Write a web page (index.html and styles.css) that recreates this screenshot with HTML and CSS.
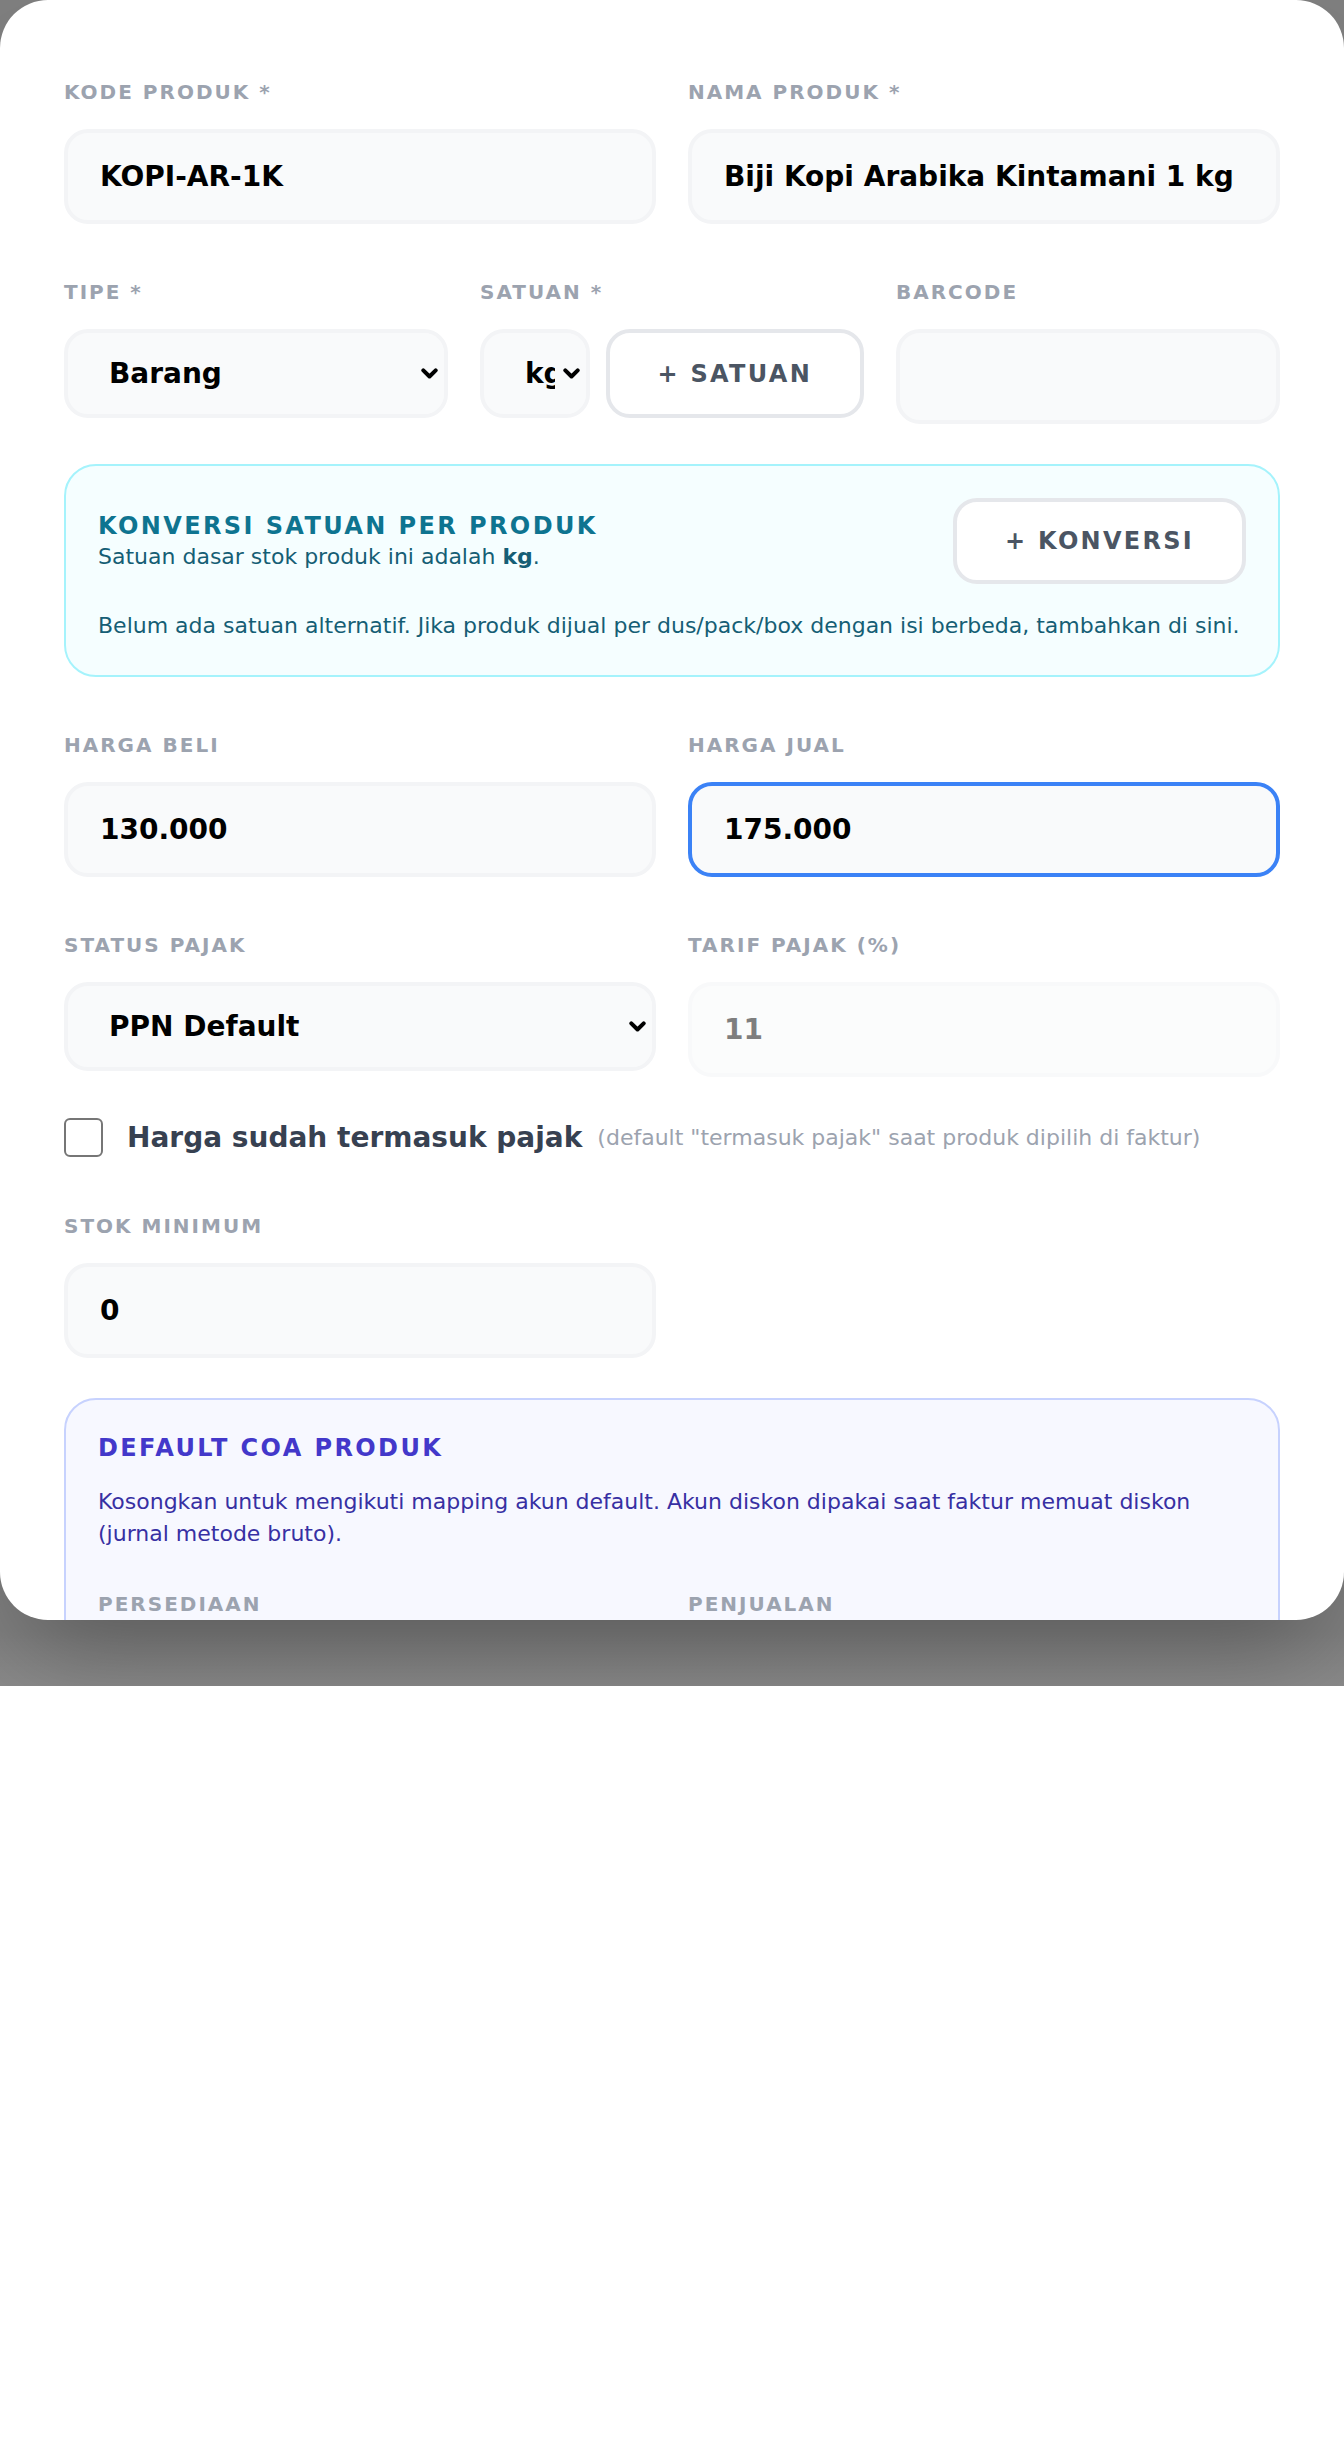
FILE: index.html
```html
<!DOCTYPE html>
<html lang="id">
<head>
<meta charset="utf-8">
<title>Produk</title>
<link rel="stylesheet" href="styles.css">
</head>
<body>
<div class="backdrop">
  <div class="modal">
    <form class="form">
      <div class="row row-2">
        <div class="field">
          <label class="label">Kode Produk *</label>
          <input class="input" type="text" value="KOPI-AR-1K">
        </div>
        <div class="field">
          <label class="label">Nama Produk *</label>
          <input class="input" type="text" value="Biji Kopi Arabika Kintamani 1 kg">
        </div>
      </div>

      <div class="row row-3">
        <div class="field">
          <label class="label">Tipe *</label>
          <div class="select-wrap">
            <select class="select"><option>Barang</option><option>Jasa</option></select>
            <span class="select-cap"><svg class="chevron" viewBox="0 0 17 11" aria-hidden="true"><path d="M2.3 2.3 L8.5 8.5 L14.7 2.3" /></svg></span>
          </div>
        </div>
        <div class="field">
          <label class="label">Satuan *</label>
          <div class="satuan">
            <div class="select-wrap select-grow">
              <select class="select"><option>kg</option><option>pcs</option></select>
              <span class="select-cap"><svg class="chevron" viewBox="0 0 17 11" aria-hidden="true"><path d="M2.3 2.3 L8.5 8.5 L14.7 2.3" /></svg></span>
            </div>
            <button type="button" class="btn">+ Satuan</button>
          </div>
        </div>
        <div class="field">
          <label class="label">Barcode</label>
          <input class="input" type="text" value="">
        </div>
      </div>

      <section class="panel panel-cyan">
        <div class="panel-head">
          <div class="panel-head-text">
            <h3 class="panel-title title-cyan">Konversi Satuan per Produk</h3>
            <p class="panel-sub">Satuan dasar stok produk ini adalah <b>kg</b>.</p>
          </div>
          <button type="button" class="btn btn-konversi">+ Konversi</button>
        </div>
        <p class="panel-note">Belum ada satuan alternatif. Jika produk dijual per dus/pack/box dengan isi berbeda, tambahkan di sini.</p>
      </section>

      <div class="row row-2">
        <div class="field">
          <label class="label">Harga Beli</label>
          <input class="input" type="text" value="130.000">
        </div>
        <div class="field">
          <label class="label">Harga Jual</label>
          <input class="input is-focused" type="text" value="175.000">
        </div>
      </div>

      <div class="row row-2">
        <div class="field">
          <label class="label">Status Pajak</label>
          <div class="select-wrap">
            <select class="select"><option>PPN Default</option><option>Bebas Pajak</option></select>
            <span class="select-cap"><svg class="chevron" viewBox="0 0 17 11" aria-hidden="true"><path d="M2.3 2.3 L8.5 8.5 L14.7 2.3" /></svg></span>
          </div>
        </div>
        <div class="field">
          <label class="label">Tarif Pajak (%)</label>
          <input class="input is-disabled" type="text" value="11" disabled>
        </div>
      </div>

      <label class="check-row">
        <input class="checkbox" type="checkbox">
        <span class="check-text">
          <span class="check-strong">Harga sudah termasuk pajak</span>
          <span class="check-hint">(default "termasuk pajak" saat produk dipilih di faktur)</span>
        </span>
      </label>

      <div class="row row-2">
        <div class="field">
          <label class="label">Stok Minimum</label>
          <input class="input" type="text" value="0">
        </div>
      </div>

      <section class="panel panel-indigo">
        <h3 class="panel-title title-indigo">Default COA Produk</h3>
        <p class="coa-desc">Kosongkan untuk mengikuti mapping akun default. Akun diskon dipakai saat faktur memuat diskon (jurnal metode bruto).</p>
        <div class="coa-grid">
          <div class="field">
            <label class="label">Persediaan</label>
            <div class="select-wrap">
              <select class="select"><option>Default</option></select>
              <span class="select-cap"><svg class="chevron" viewBox="0 0 17 11" aria-hidden="true"><path d="M2.3 2.3 L8.5 8.5 L14.7 2.3" /></svg></span>
            </div>
          </div>
          <div class="field">
            <label class="label">Penjualan</label>
            <div class="select-wrap">
              <select class="select"><option>Default</option></select>
              <span class="select-cap"><svg class="chevron" viewBox="0 0 17 11" aria-hidden="true"><path d="M2.3 2.3 L8.5 8.5 L14.7 2.3" /></svg></span>
            </div>
          </div>
        </div>
      </section>
    </form>
  </div>
</div>
</body>
</html>
```
FILE: styles.css
```css
* {
  box-sizing: border-box;
}

html,
body {
  margin: 0;
  padding: 0;
  background: #ffffff;
}

body {
  font-family: "DejaVu Sans", Verdana, sans-serif;
  color: #000000;
}

.backdrop {
  height: 1686px;
  background: linear-gradient(to bottom, #7f7f7f 0, #808080 1630px, #8a8a8a 1686px);
}

.modal {
  height: 1620px;
  background: #ffffff;
  border-radius: 48px;
  overflow: hidden;
  padding: 64px 64px 0;
  box-shadow: 0 50px 100px -24px rgba(0, 0, 0, 0.3);
}

.form {
  display: flex;
  flex-direction: column;
  gap: 40px;
}

.row {
  display: grid;
  column-gap: 32px;
}

.row-2 {
  grid-template-columns: 1fr 1fr;
}

.row-3 {
  grid-template-columns: 1fr 1fr 1fr;
}

.field {
  display: flex;
  flex-direction: column;
  min-width: 0;
}

.label {
  height: 56px;
  display: flex;
  align-items: center;
  margin-bottom: 9px;
  font-size: 20px;
  font-weight: 700;
  letter-spacing: 0.1em;
  text-transform: uppercase;
  color: #9ca3af;
  white-space: nowrap;
}

.input {
  display: block;
  width: 100%;
  height: 95px;
  margin: 0;
  padding: 0 32px;
  border: 4px solid #f3f4f6;
  border-radius: 24px;
  background: #f9fafb;
  font-family: "DejaVu Sans", Verdana, sans-serif;
  font-size: 28px;
  font-weight: 700;
  color: #000000;
  outline: none;
}

.input.is-focused {
  border-color: #3b82f6;
}

.input.is-disabled {
  opacity: 0.5;
  color: #000000;
  -webkit-text-fill-color: #000000;
}

.select-wrap {
  position: relative;
}

.select-grow {
  flex: 1 1 auto;
  min-width: 0;
}

.select {
  display: block;
  width: 100%;
  height: 89px;
  margin: 0;
  padding: 0 31px 0 41px;
  border: 4px solid #f3f4f6;
  border-radius: 24px;
  background: #f9fafb;
  font-family: "DejaVu Sans", Verdana, sans-serif;
  font-size: 28px;
  font-weight: 700;
  color: #000000;
  -webkit-appearance: none;
  appearance: none;
  outline: none;
}

.select-cap {
  position: absolute;
  top: 4px;
  right: 4px;
  bottom: 4px;
  width: 31px;
  display: flex;
  align-items: center;
  justify-content: flex-end;
  padding-right: 6px;
  background: #f9fafb;
  border-radius: 0 20px 20px 0;
  pointer-events: none;
}

.chevron {
  display: block;
  width: 17px;
  height: 11px;
  fill: none;
  stroke: #000000;
  stroke-width: 4;
  stroke-linecap: round;
  stroke-linejoin: round;
}

.satuan {
  display: flex;
  gap: 16px;
}

.btn {
  flex: none;
  height: 89px;
  margin: 0;
  padding: 0 48px;
  border: 4px solid #e5e7eb;
  border-radius: 24px;
  background: #ffffff;
  font-family: "DejaVu Sans", Verdana, sans-serif;
  font-size: 24px;
  font-weight: 700;
  letter-spacing: 0.095em;
  text-transform: uppercase;
  color: #4b5563;
  white-space: nowrap;
}

.panel {
  border: 2px solid;
  border-radius: 32px;
  padding: 32px;
}

.panel-cyan {
  background: #f5feff;
  border-color: #a5f3fc;
}

.panel-indigo {
  background: #f7f8ff;
  border-color: #c7d2fe;
}

.panel-head {
  display: flex;
  align-items: center;
  justify-content: space-between;
  gap: 24px;
}

.panel-title {
  margin: 0;
  font-size: 24px;
  line-height: 32px;
  font-weight: 700;
  letter-spacing: 0.1em;
  text-transform: uppercase;
}

.title-cyan {
  color: #0e7490;
}

.title-indigo {
  color: #4338ca;
}

.panel-sub {
  margin: 0;
  font-size: 22px;
  line-height: 30px;
  color: #155e75;
}

.panel-sub b {
  font-weight: 700;
}

.btn-konversi {
  height: 86px;
  background: #ffffff;
}

.panel-note {
  margin: 24px 0 0;
  font-size: 22px;
  line-height: 35px;
  color: #155e75;
}

.check-row {
  display: flex;
  align-items: center;
  gap: 24px;
  height: 41px;
}

.checkbox {
  -webkit-appearance: none;
  appearance: none;
  flex: none;
  width: 39px;
  height: 39px;
  margin: 0;
  border: 2px solid #767676;
  border-radius: 6px;
  background: #ffffff;
}

.check-text {
  display: flex;
  align-items: center;
  gap: 15px;
  white-space: nowrap;
}

.check-strong {
  font-size: 28px;
  line-height: 41px;
  font-weight: 700;
  color: #374151;
}

.check-hint {
  font-size: 22px;
  line-height: 30px;
  color: #9ca3af;
}

.coa-desc {
  margin: 22px 0 0;
  font-size: 22px;
  line-height: 32px;
  color: #3730a3;
}

.coa-grid {
  margin-top: 26px;
  display: grid;
  grid-template-columns: 1fr 1fr;
  column-gap: 32px;
}
```
